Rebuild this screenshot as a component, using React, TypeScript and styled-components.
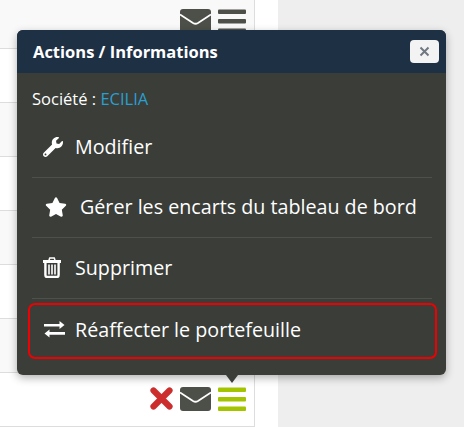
import styled, { createGlobalStyle } from 'styled-components'
import { FaStar, FaWrench } from 'react-icons/fa'

const GlobalStyle = createGlobalStyle`
    html, body { margin: 0; padding: 0; background: #eeeeee; }
    body { font-family: "Open Sans", "Liberation Sans", sans-serif; }
    * { box-sizing: border-box; }
`

const Page = styled.div`
    position: relative;
    width: 464px;
    height: 427px;
    overflow: hidden;
`

const Panel = styled.div`
    width: 278px;
    height: 427px;
    background: #fff;
    overflow: hidden;
`

const Table = styled.div`
    width: 255px;
    margin-top: -5px;
    border-right: 1px solid #ddd;
`

const Row = styled.div<{ $odd: boolean }>`
    height: 54px;
    border-bottom: 1px solid #ddd;
    background: ${p => (p.$odd ? '#f9f9f9' : '#fff')};
    display: flex;
    align-items: center;
    justify-content: flex-end;
    gap: 7px;
    padding: 0 8px 2px 0;
`

const Popover = styled.div`
    position: absolute;
    left: 17px;
    top: 30px;
    width: 429px;
    height: 345px;
    background: #3a3d38;
    border-radius: 6px;
    box-shadow: 0 3px 9px rgba(0, 0, 0, 0.3);
    display: flex;
    flex-direction: column;

    &::after {
        content: "";
        position: absolute;
        left: 209px;
        bottom: -8px;
        border-style: solid;
        border-width: 8px 6px 0;
        border-color: #3a3d38 transparent transparent;
    }
`

const Header = styled.div`
    height: 43px;
    flex: none;
    background: #1e3044;
    border-radius: 6px 6px 0 0;
    display: flex;
    align-items: center;
    justify-content: space-between;
    padding: 0 7px 0 16px;
`

const Title = styled.h3`
    margin: 0;
    font-size: 16.5px;
    font-weight: 700;
    color: #fff;
`

const CloseButton = styled.button`
    width: 29px;
    height: 23px;
    margin-top: -1px;
    padding: 0;
    border: 0;
    border-radius: 4px;
    background: #f3f3f3;
    color: #6f7780;
    display: flex;
    align-items: center;
    justify-content: center;
`

const Body = styled.div`
    padding: 16px 14px 0 15px;
    color: #fff;
`

const Company = styled.div`
    font-size: 16.5px;
    line-height: 20px;
    height: 20px;
`

const CompanyLink = styled.span`
    color: #2a9fd0;
`

const Menu = styled.div`
    margin-top: 9px;
    display: flex;
    flex-direction: column;
`

const Item = styled.div<{ $tall?: boolean; $inset: number; $gap: number }>`
    height: ${p => (p.$tall ? '61px' : '60px')};
    padding: 0 0 2px ${p => p.$inset}px;
    border-bottom: 1px solid #4d504b;
    display: flex;
    align-items: center;
    gap: ${p => p.$gap}px;
    font-size: 19.7px;
    color: #fff;
`

const ActiveItem = styled(Item)`
    height: 56px;
    margin: 4px -5px 0 -4px;
    padding-bottom: 3px;
    border: 2px solid #f00000;
    border-radius: 7px;
`

const ItemIcon = styled.span<{ $width: number }>`
    display: flex;
    width: ${p => p.$width}px;
`

const CloseIcon = () => (
    <svg width="11" height="11" viewBox="0 0 11 11">
        <path d="M1.5 1.5 L9.5 9.5 M9.5 1.5 L1.5 9.5" stroke="currentColor" strokeWidth="2" />
    </svg>
)

const TrashIcon = () => (
    <svg width="18" height="21" viewBox="0 0 18 21">
        <path d="M6 3 L6.8 1 H11.2 L12 3" fill="none" stroke="#fff" strokeWidth="1.6" />
        <rect x="0" y="3" width="18" height="3" fill="#fff" />
        <path d="M2.4 5 V18 Q2.4 20 4 20 H14 Q15.6 20 15.6 18 V5" fill="none" stroke="#fff" strokeWidth="2.4" />
        <path d="M6 7.5 V17.5 M9 7.5 V17.5 M12 7.5 V17.5" stroke="#fff" strokeWidth="1.6" />
    </svg>
)

const ExchangeIcon = () => (
    <svg width="21" height="17" viewBox="0 0 21 17">
        <path d="M0 2.9 H15.5 V0 L20.5 4 L15.5 8 V5.6 H0 Z" fill="#fff" />
        <path d="M21 11 H5.5 V8.5 L0.5 12.5 L5.5 16.5 V13.7 H21 Z" fill="#fff" />
    </svg>
)

const CrossIcon = () => (
    <svg width="23" height="23" viewBox="0 0 23 23">
        <path d="M3.5 3.5 L19.5 19.5 M19.5 3.5 L3.5 19.5" stroke="#cc2e2e" strokeWidth="6.2" strokeLinecap="round" />
    </svg>
)

const MailIcon = () => (
    <svg width="31" height="24" viewBox="0 0 31 24">
        <rect width="31" height="24" rx="3" fill="#4d4f49" />
        <path d="M0 5.5 L13 14 Q15.5 15.5 18 14 L31 5.5" fill="none" stroke="#fff" strokeWidth="1.8" />
    </svg>
)

const BarsIcon = ({ color }: { color: string }) => (
    <svg width="28" height="24" viewBox="0 0 28 24" fill={color}>
        <rect y="0.5" width="28" height="4.5" rx="1" />
        <rect y="10" width="28" height="4.5" rx="1" />
        <rect y="19.5" width="28" height="4.5" rx="1" />
    </svg>
)

const rows = [0, 1, 2, 3, 4, 5, 6, 7]

const App = () => {
    return (
        <Page>
            <GlobalStyle />
            <Panel>
                <Table>
                    {rows.map(row => (
                        <Row key={row} $odd={row % 2 === 0}>
                            {row === 7 && <CrossIcon />}
                            {(row === 0 || row === 7) && <MailIcon />}
                            {(row === 0 || row === 7) && <BarsIcon color={row === 7 ? '#a4c400' : '#4d4f49'} />}
                        </Row>
                    ))}
                </Table>
            </Panel>
            <Popover>
                <Header>
                    <Title>Actions / Informations</Title>
                    <CloseButton><CloseIcon /></CloseButton>
                </Header>
                <Body>
                    <Company>Société : <CompanyLink>ECILIA</CompanyLink></Company>
                    <Menu>
                        <Item $inset={11} $gap={11}><ItemIcon $width={21}><FaWrench size={20} /></ItemIcon>Modifier</Item>
                        <Item $inset={13} $gap={13}><ItemIcon $width={22}><FaStar size={22} /></ItemIcon>Gérer les encarts du tableau de bord</Item>
                        <Item $tall $inset={11} $gap={14}><ItemIcon $width={18}><TrashIcon /></ItemIcon>Supprimer</Item>
                        <ActiveItem $inset={14} $gap={10}><ItemIcon $width={21}><ExchangeIcon /></ItemIcon>Réaffecter le portefeuille</ActiveItem>
                    </Menu>
                </Body>
            </Popover>
        </Page>
    )
}

export default App
